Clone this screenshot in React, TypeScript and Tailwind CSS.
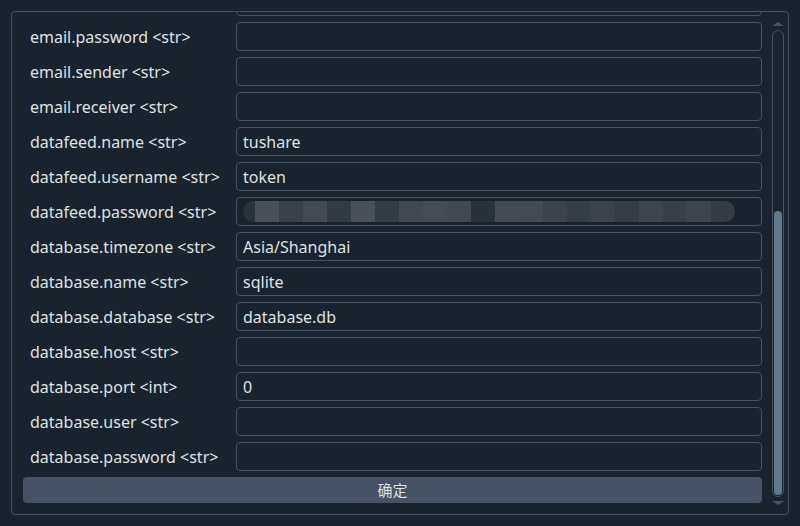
const rows: Array<[string, string]> = [
  ["", ""],
  ["email.password <str>", ""],
  ["email.sender <str>", ""],
  ["email.receiver <str>", ""],
  ["datafeed.name <str>", "tushare"],
  ["datafeed.username <str>", "token"],
  ["datafeed.password <str>", "__blur__"],
  ["database.timezone <str>", "Asia/Shanghai"],
  ["database.name <str>", "sqlite"],
  ["database.database <str>", "database.db"],
  ["database.host <str>", ""],
  ["database.port <int>", "0"],
  ["database.user <str>", ""],
  ["database.password <str>", ""],
];

const blurBlocks: Array<[number, string]> = [
  [12, "#2a333c"],
  [24, "#4a5058"],
  [24, "#3a4149"],
  [24, "#434a52"],
  [24, "#323a42"],
  [24, "#4a5159"],
  [24, "#323c45"],
  [24, "#414850"],
  [24, "#454c53"],
  [24, "#414850"],
  [24, "#29323b"],
  [24, "#454b52"],
  [24, "#434a52"],
  [24, "#3c434b"],
  [24, "#363e47"],
  [24, "#3c434b"],
  [24, "#363d46"],
  [24, "#3f454d"],
  [24, "#394048"],
  [24, "#3f454d"],
  [24, "#353c44"],
];

function BlurredValue() {
  return (
    <div className="flex h-[21px] items-stretch overflow-hidden rounded-full">
      {blurBlocks.map(([w, c], i) => (
        <div key={i} className="shrink-0" style={{ width: w, background: c }} />
      ))}
    </div>
  );
}

function Field({ label, value }: { label: string; value: string }) {
  return (
    <>
      <div className="flex items-center pl-[7px] text-[16px] text-[#dfe1e2]">{label}</div>
      <div className="flex h-[29px] min-w-0 items-center overflow-hidden rounded-[4px] border border-[#455364] bg-[#19232d] pl-[6px] text-[16px] text-[#dfe1e2]">
        {value === "__blur__" ? <BlurredValue /> : value}
      </div>
    </>
  );
}

function ScrollBar() {
  return (
    <div className="flex w-[12px] flex-col items-center pt-[10px] pb-[9px]">
      <div className="h-0 w-0 border-x-[6px] border-b-[4px] border-x-transparent border-b-[#455364]" />
      <div className="mt-[4px] flex w-[12px] flex-1 flex-col rounded-full border border-[#455364] px-px pb-px">
        <div className="h-[180px]" />
        <div className="flex-1 rounded-full bg-[#60798b]" />
      </div>
      <div className="mt-[4px] h-0 w-0 border-x-[6px] border-t-[4px] border-x-transparent border-t-[#455364]" />
    </div>
  );
}

export default function App() {
  return (
    <div
      className="h-[526px] w-[800px] bg-[#19232d] p-[11px]"
      style={{ fontFamily: '"Noto Sans", "Noto Sans CJK SC", sans-serif' }}
    >
      <div className="flex h-[504px] rounded-[4px] border border-[#455364]">
        <div className="flex w-[750px] flex-col pl-[11px] pb-[10px]">
          <div className="h-[459px] overflow-hidden">
            <div className="-mt-[25px] grid grid-cols-[213px_minmax(0,1fr)] gap-y-[6px]">
              {rows.map(([l, v], i) => (
                <Field key={i} label={l} value={v} />
              ))}
            </div>
          </div>
          <button className="mt-[6px] h-[26px] rounded-[4px] bg-[#455364] text-[15px] text-[#dfe1e2]">
            确定
          </button>
        </div>
        <div className="flex flex-1 justify-center pl-[10px] pr-[4px]">
          <ScrollBar />
        </div>
      </div>
    </div>
  );
}
